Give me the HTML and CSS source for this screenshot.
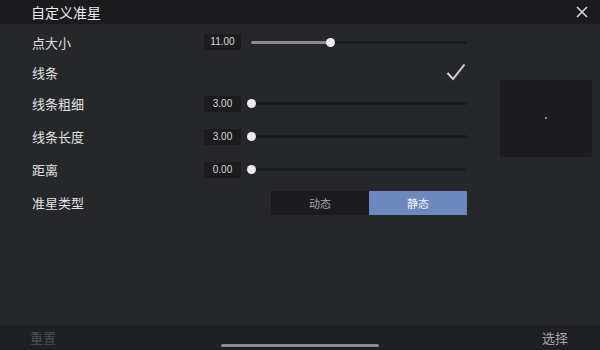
FILE: index.html
```html
<!DOCTYPE html>
<html>
<head>
    <title>自定义准星</title>
    <link rel="stylesheet" href="styles.css">
</head>
<body>
    <div class="panel">
        <header class="panel-header">
            <span class="panel-title">自定义准星</span>
            <svg class="close-icon" width="12" height="12" viewBox="0 0 12 12">
                <path d="M1 1 L11 11 M11 1 L1 11" stroke="#d6d6d6" stroke-width="1.6" fill="none"/>
            </svg>
        </header>

        <div class="panel-body">
            <div class="settings">
                <div class="setting-row row-short">
                    <span class="setting-label">点大小</span>
                    <div class="setting-control">
                        <span class="value-box">11.00</span>
                        <div class="slider">
                            <div class="slider-fill" style="width: 79px"></div>
                            <div class="slider-thumb" style="left: 79px"></div>
                        </div>
                    </div>
                </div>
                <div class="setting-row row-short">
                    <span class="setting-label">线条</span>
                    <div class="setting-control control-end">
                        <svg class="check-icon" width="20" height="18" viewBox="0 0 20 18">
                            <path d="M1.5 10 L7 16 L18.5 1.5" stroke="#d4d4d4" stroke-width="2" fill="none"/>
                        </svg>
                    </div>
                </div>
                <div class="setting-row">
                    <span class="setting-label">线条粗细</span>
                    <div class="setting-control">
                        <span class="value-box">3.00</span>
                        <div class="slider">
                            <div class="slider-thumb" style="left: 0px"></div>
                        </div>
                    </div>
                </div>
                <div class="setting-row">
                    <span class="setting-label">线条长度</span>
                    <div class="setting-control">
                        <span class="value-box">3.00</span>
                        <div class="slider">
                            <div class="slider-thumb" style="left: 0px"></div>
                        </div>
                    </div>
                </div>
                <div class="setting-row">
                    <span class="setting-label">距离</span>
                    <div class="setting-control">
                        <span class="value-box">0.00</span>
                        <div class="slider">
                            <div class="slider-thumb" style="left: 0px"></div>
                        </div>
                    </div>
                </div>
                <div class="setting-row">
                    <span class="setting-label">准星类型</span>
                    <div class="setting-control control-end">
                        <div class="segmented">
                            <span class="segment">动态</span>
                            <span class="segment segment-selected">静态</span>
                        </div>
                    </div>
                </div>
            </div>

            <!-- crosshair preview -->
            <div class="preview">
                <span class="preview-dot"></span>
            </div>
        </div>

        <footer class="panel-footer">
            <span class="footer-btn footer-btn-disabled">重置</span>
            <span class="footer-btn">选择</span>
            <span class="home-bar"></span>
        </footer>
    </div>
</body>
</html>
```

FILE: styles.css
```css
body {
    margin: 0;
    padding: 0;
    background-color: #25272b;
    font-family: "Noto Sans CJK SC", "Noto Sans", sans-serif;
    color: #e4e4e4;
}

.panel {
    width: 600px;
    height: 350px;
    display: flex;
    flex-direction: column;
    overflow: hidden;
}

/** Header **/

.panel-header {
    height: 24px;
    flex-shrink: 0;
    background-color: #1b1a1f;
    display: flex;
    align-items: center;
    justify-content: space-between;
    padding: 0 12px 0 31px;
}

.panel-title {
    font-size: 14px;
    color: #ececec;
    line-height: 24px;
}

.close-icon {
    display: block;
}

/** Body **/

.panel-body {
    flex-grow: 1;
    display: flex;
    flex-direction: row;
    align-items: flex-start;
    padding-top: 3px;
}

.settings {
    display: flex;
    flex-direction: column;
    padding-left: 32px;
}

.setting-row {
    display: grid;
    grid-template-columns: 172px 263px;
    align-items: center;
    height: 33px;
}

.row-short {
    height: 30px;
}

.setting-label {
    font-size: 13px;
    color: #e2e2e2;
}

.setting-control {
    display: flex;
    align-items: center;
}

.control-end {
    justify-content: flex-end;
}

.value-box {
    width: 37px;
    height: 16px;
    line-height: 16px;
    background-color: #1c1c1f;
    font-family: "Liberation Sans", sans-serif;
    font-size: 10px;
    color: #d8d8d8;
    text-align: center;
}

.slider {
    position: relative;
    margin-left: 10px;
    width: 216px;
    height: 3px;
    background-color: #1b1c1f;
    border-radius: 2px;
}

.slider-fill {
    height: 3px;
    background-color: #8b8b8d;
    border-radius: 2px;
}

.slider-thumb {
    position: absolute;
    top: -3px;
    width: 9px;
    height: 9px;
    margin-left: -4px;
    border-radius: 50%;
    background-color: #ececec;
}

.check-icon {
    display: block;
    margin-right: 1px;
}

.segmented {
    display: flex;
    width: 196px;
    height: 24px;
}

.segment {
    flex: 1;
    display: flex;
    align-items: center;
    justify-content: center;
    background-color: #1c1b1f;
    font-size: 11px;
    color: #a9a9ab;
}

.segment-selected {
    background-color: #6d88bf;
    color: #f2f4f8;
}

/** Preview **/

.preview {
    position: relative;
    margin-left: 33px;
    margin-top: 53px;
    width: 92px;
    height: 77px;
    background-color: #1d1c20;
    border-radius: 2px;
}

.preview-dot {
    position: absolute;
    left: 45px;
    top: 37px;
    width: 2px;
    height: 2px;
    background-color: #5fa586;
}

/** Footer **/

.panel-footer {
    position: relative;
    height: 25px;
    flex-shrink: 0;
    background-color: #1e2023;
    display: flex;
    align-items: center;
    justify-content: space-between;
    padding: 0 32px 0 30px;
}

.footer-btn {
    font-size: 13px;
    color: #a8a8aa;
}

.footer-btn-disabled {
    color: #4c4f53;
}

.home-bar {
    position: absolute;
    left: 221px;
    bottom: 3px;
    width: 158px;
    height: 3px;
    border-radius: 2px;
    background-color: #8a8b8d;
}
```
